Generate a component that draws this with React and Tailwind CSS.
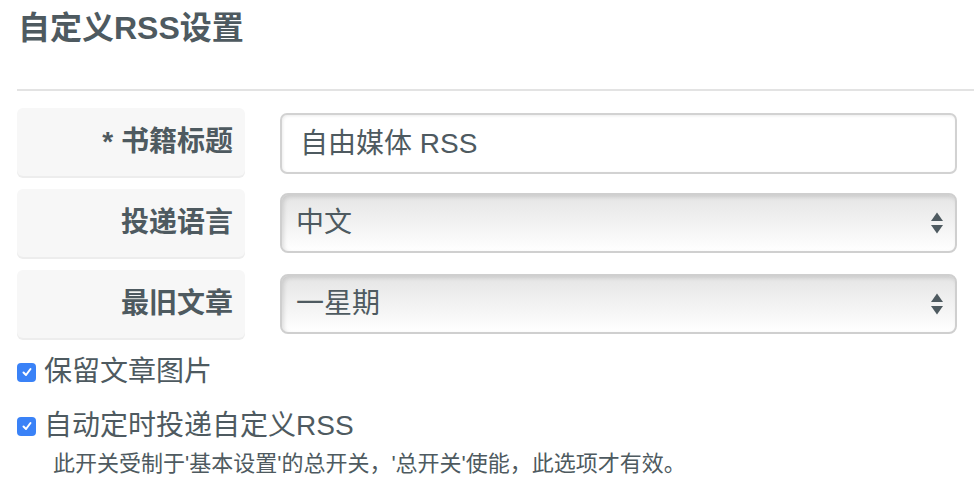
import React, { useState } from 'react';

const FONT = { fontFamily: '"Liberation Sans", "Noto Sans CJK SC", sans-serif' };

const Label = ({ children }) => (
  <div className="w-[228px] h-full shrink-0 rounded-[6px] bg-[#f7f7f7] shadow-[0_2px_0_#ededed] flex items-center justify-end pr-[12px] text-[28px] font-bold text-[#4e5a60]">
    {children}
  </div>
);

const SelectBox = ({ value }) => (
  <div className="relative ml-[35px] w-[680px] h-[60px] rounded-[8px] border-2 border-[#cfcfcf] bg-gradient-to-b from-[#e5e5e5] to-[#ffffff] shadow-[inset_2px_2px_4px_rgba(0,0,0,0.12)] flex items-center pl-[14px] text-[28px] text-[#4e5a60]">
    <span>{value}</span>
    <svg className="absolute right-[12px] top-1/2 -translate-y-1/2" width="12" height="24" viewBox="0 0 12 24">
      <path d="M6 1.5 L12 10 L0 10 Z" fill="#4e5a60" />
      <path d="M0 14 L12 14 L6 22.5 Z" fill="#4e5a60" />
    </svg>
  </div>
);

const Check = ({ checked }) => (
  <div className={`w-[19px] h-[19px] rounded-[4px] flex items-center justify-center ${checked ? 'bg-[#3a82f7]' : 'bg-white border border-gray-400'}`}>
    {checked && (
      <svg width="12" height="12" viewBox="0 0 12 12">
        <path d="M2.5 6.5 L5 9 L9.5 3" stroke="#fff" strokeWidth="2" fill="none" strokeLinecap="round" strokeLinejoin="round" />
      </svg>
    )}
  </div>
);

export default function App() {
  const [keepImg, setKeepImg] = useState(true);
  const [autoSend, setAutoSend] = useState(true);

  return (
    <div className="w-[974px] h-[486px] bg-white overflow-hidden px-[17px]" style={FONT}>
      <div className="h-[56px] flex items-center pl-[1px] text-[32px] font-bold text-[#4e5a60]">自定义RSS设置</div>
      <div className="mt-[33px] h-[2px] bg-[#e3e3e3] -mr-[17px]"></div>

      <div className="mt-[17px] flex flex-col gap-[13px]">
        <div className="h-[68px] flex items-center">
          <Label>* 书籍标题</Label>
          <div className="ml-[35px] w-[680px] h-[61px] mt-[3px] rounded-[7px] border-2 border-[#d2d2d2] bg-white shadow-[inset_1px_1px_3px_rgba(0,0,0,0.08)] flex items-center pl-[18px] text-[28px] text-[#4e5a60]">
            自由媒体 RSS
          </div>
        </div>
        <div className="h-[68px] flex items-center">
          <Label>投递语言</Label>
          <SelectBox value="中文" />
        </div>
        <div className="h-[68px] flex items-center">
          <Label>最旧文章</Label>
          <SelectBox value="一星期" />
        </div>
      </div>

      <div className="mt-[16px] h-[36px] flex items-center gap-[8px] text-[28px] text-[#4e5a60] cursor-pointer" onClick={() => setKeepImg(!keepImg)}>
        <Check checked={keepImg} />
        <span>保留文章图片</span>
      </div>
      <div className="mt-[18px] h-[36px] flex items-center gap-[8px] text-[28px] text-[#4e5a60] cursor-pointer" onClick={() => setAutoSend(!autoSend)}>
        <Check checked={autoSend} />
        <span>自动定时投递自定义RSS</span>
      </div>
      <div className="mt-[6px] pl-[36px] h-[26px] flex items-center text-[22px] text-[#4e5a60]">
        此开关受制于'基本设置'的总开关，'总开关'使能，此选项才有效。
      </div>
    </div>
  );
}
